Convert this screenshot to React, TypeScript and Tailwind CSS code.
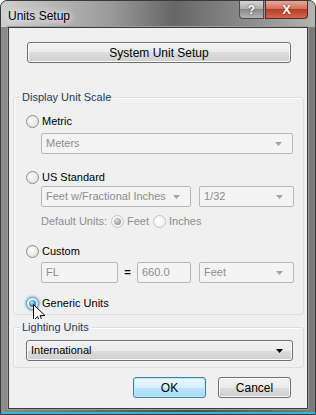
import React from "react";

const font = { fontFamily: '"Liberation Sans", Arial, sans-serif' };

function Radio({ checked = false, disabled = false, focus = false }: { checked?: boolean; disabled?: boolean; focus?: boolean }) {
    return (
        <span
            className={
                "relative flex items-center justify-center w-[13px] h-[13px] rounded-full border shrink-0 " +
                (disabled
                    ? "border-[#c4c4c4] bg-[radial-gradient(circle_at_40%_40%,#ffffff,#ececec)]"
                    : "border-[#8a8c8e] bg-[radial-gradient(circle_at_40%_40%,#ffffff,#d4d6d8)]") +
                (focus ? " shadow-[0_0_2px_1px_#6cc3f0]" : "")
            }
        >
            {checked && (
                <span
                    className={
                        "w-[7px] h-[7px] rounded-full " +
                        (disabled
                            ? "bg-[radial-gradient(circle_at_40%_35%,#e0e0e0,#9a9a9a_70%,#8a8a8a)]"
                            : "bg-[radial-gradient(circle_at_40%_35%,#b7ecff,#1f86d6_60%,#0b4a8f)]")
                    }
                />
            )}
        </span>
    );
}

function Arrow({ dark = false }: { dark?: boolean }) {
    return (
        <svg width="7" height="4" viewBox="0 0 7 4" className="shrink-0">
            <path d="M0 0 H7 L3.5 4 Z" fill={dark ? "#000000" : "#a3a3a3"} />
        </svg>
    );
}

function Combo({ text, width }: { text: string; width: string }) {
    return (
        <div className={"h-[21px] flex items-center justify-between pl-[4px] pr-[10px] border border-[#b5b8ba] rounded-[2px] bg-[#f4f4f4] text-[#8d8d8d] " + width}>
            <span>{text}</span>
            <Arrow />
        </div>
    );
}

function Field({ text, width }: { text: string; width: string }) {
    return (
        <div className={"h-[21px] flex items-center pl-[4px] border border-[#b5b8ba] rounded-[2px] bg-[#f4f4f4] text-[#8d8d8d] " + width}>
            {text}
        </div>
    );
}

function Cursor() {
    return (
        <svg width="13" height="20" viewBox="0 0 13 20" className="absolute left-[7px] top-[9px]">
            <path d="M0.5 0.5 L0.5 16.5 L4.5 12.5 L7.2 18.6 L9.6 17.6 L7 11.6 L12 11.6 Z" fill="#ffffff" stroke="#000000" strokeWidth="1" strokeLinejoin="miter" />
        </svg>
    );
}

function Group({ label, className, children }: { label: string; className: string; children: React.ReactNode }) {
    return (
        <div className={"relative ml-[4px] w-[291px] border border-[#d5dfe5] rounded-[3px] shadow-[inset_1px_1px_0_#ffffff] " + className}>
            <span className="absolute left-[6px] -top-[9px] px-[2px] leading-[16px] bg-[#f0f0f0] text-[#1e395b]">{label}</span>
            {children}
        </div>
    );
}

const btn =
    "h-[21px] flex items-center justify-center rounded-[3px] border border-[#707070] bg-[linear-gradient(#f2f2f2_0%,#ebebeb_50%,#dddddd_50%,#cfcfcf_100%)] shadow-[inset_0_0_0_1px_#fbfbfb] text-black";

export default function App() {
    return (
        <div
            style={font}
            className="w-[316px] h-[415px] flex flex-col rounded-t-[7px] border border-[#3a3a3a] bg-[linear-gradient(90deg,#8c8c8c,#5c5c5c_45%,#4e4e4e_60%,#7c7c7c)] text-[11px] text-black overflow-hidden"
        >
            {/* title bar */}
            <div className="h-[26px] flex justify-between items-start pl-[7px] pr-[7px] bg-[linear-gradient(90deg,#cfcfcf,#9a9a9a_35%,#666666_55%,#8e8e8e_80%,#b4b4b4)]">
                <span className="mt-[6px] text-[12px] text-black [text-shadow:0_0_6px_#ffffff,0_0_10px_#ffffff]">Units Setup</span>
                <div className="flex gap-[1px]">
                    <div className="w-[25px] h-[18px] flex items-center justify-center rounded-bl-[4px] border border-t-0 border-[#4a4a4a] bg-[linear-gradient(#d6d6d6,#a9a9a9_50%,#8a8a8a_50%,#b4b4b4)] text-white font-bold text-[12px] [text-shadow:0_0_2px_#333333]">
                        ?
                    </div>
                    <div className="w-[43px] h-[18px] flex items-center justify-center rounded-br-[4px] border border-t-0 border-[#5a2a22] bg-[linear-gradient(#e9a99a,#d26a55_50%,#b83e27_50%,#d3664c)] text-white font-bold text-[13px] [text-shadow:0_0_2px_#5a1a10]">
                        X
                    </div>
                </div>
            </div>

            {/* client area */}
            <div className="mx-[7px] h-[382px] border border-[#3c3c3c] bg-[#f0f0f0] shadow-[0_0_0_1px_#9a9a9a]">
                <div className={btn + " mt-[14px] ml-[18px] w-[264px] text-[12px]"}>System Unit Setup</div>

                <Group label="Display Unit Scale" className="mt-[34px] pt-[15px] pb-[3px] pl-[12px]">
                    <div className="h-[16px] flex items-center gap-[3px]">
                        <Radio />
                        <span>Metric</span>
                    </div>
                    <div className="mt-[4px] ml-[15px]">
                        <Combo text="Meters" width="w-[252px]" />
                    </div>

                    <div className="mt-[15px] h-[16px] flex items-center gap-[3px]">
                        <Radio />
                        <span>US Standard</span>
                    </div>
                    <div className="mt-[1px] ml-[15px] flex gap-[8px]">
                        <Combo text="Feet w/Fractional Inches" width="w-[150px]" />
                        <Combo text="1/32" width="w-[95px]" />
                    </div>
                    <div className="mt-[6px] ml-[15px] h-[16px] flex items-center text-[#8d8d8d]">
                        <span className="mr-[4px]">Default Units:</span>
                        <Radio checked disabled />
                        <span className="ml-[3px] mr-[4px]">Feet</span>
                        <Radio disabled />
                        <span className="ml-[3px]">Inches</span>
                    </div>

                    <div className="mt-[14px] h-[16px] flex items-center gap-[3px]">
                        <Radio />
                        <span>Custom</span>
                    </div>
                    <div className="mt-[3px] ml-[15px] flex items-center">
                        <Field text="FL" width="w-[77px]" />
                        <span className="w-[19px] text-center text-black font-bold">=</span>
                        <Field text="660.0" width="w-[54px]" />
                        <div className="ml-[8px]">
                            <Combo text="Feet" width="w-[95px]" />
                        </div>
                    </div>

                    <div className="relative mt-[12px] h-[16px] flex items-center gap-[3px]">
                        <Radio checked focus />
                        <span>Generic Units</span>
                        <Cursor />
                    </div>
                </Group>

                <Group label="Lighting Units" className="mt-[12px] pt-[12px] pb-[6px] pl-[12px]">
                    <div className="w-[267px] h-[21px] flex items-center justify-between pl-[4px] pr-[9px] rounded-[3px] border border-[#707070] bg-[linear-gradient(#f2f2f2_0%,#ebebeb_50%,#dddddd_50%,#cfcfcf_100%)] shadow-[inset_0_0_0_1px_#fbfbfb]">
                        <span>International</span>
                        <Arrow dark />
                    </div>
                </Group>

                <div className="mt-[9px] pr-[16px] flex justify-end gap-[12px] text-[12px]">
                    <div className="w-[73px] h-[21px] flex items-center justify-center rounded-[3px] border border-[#3c7fb1] bg-[linear-gradient(#eaf6fd_0%,#d9f0fc_50%,#bee6fd_50%,#a7d9f5_100%)] shadow-[inset_0_0_0_1px_#bfe8fb]">
                        OK
                    </div>
                    <div className={btn + " w-[73px]"}>Cancel</div>
                </div>
            </div>

            {/* bottom frame */}
            <div className="flex-1 border-b-2 border-[#33b5d9]" />
        </div>
    );
}
